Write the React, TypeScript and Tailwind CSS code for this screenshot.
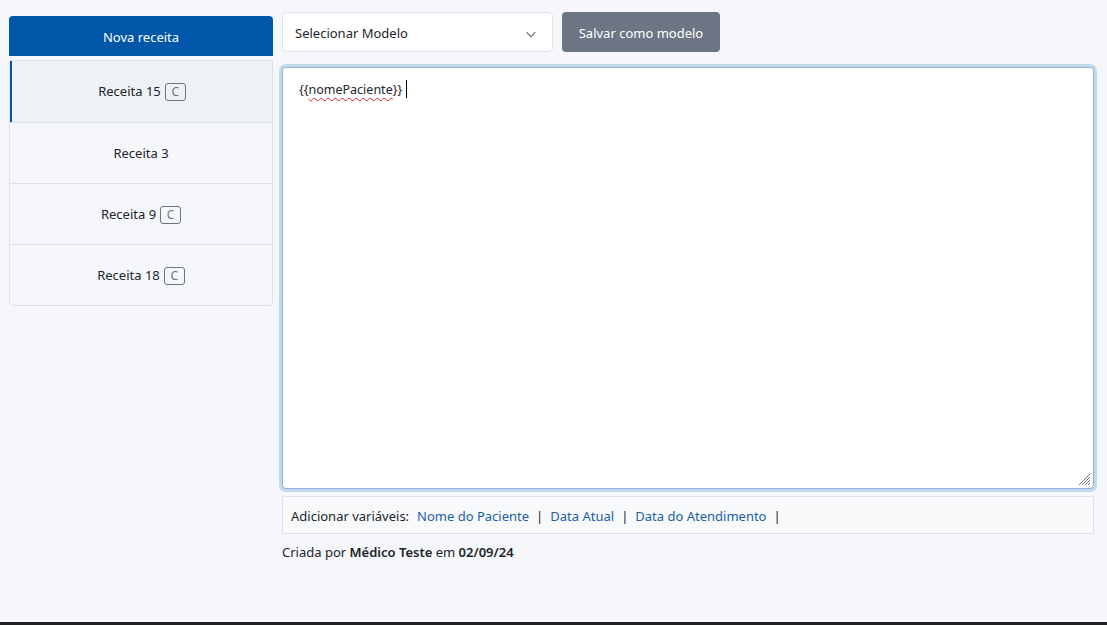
import React from "react";

const receitas = [
  { id: 15, compartilhada: true, ativa: true },
  { id: 3, compartilhada: false, ativa: false },
  { id: 9, compartilhada: true, ativa: false },
  { id: 18, compartilhada: true, ativa: false },
];

const Badge = () => (
  <span className="ml-[4px] inline-flex h-[18px] w-[21px] items-center justify-center rounded-[3px] border border-[#6c757d] text-[12px] leading-none text-[#6c757d]">
    C
  </span>
);

const App: React.FC = () => {
  return (
    <div
      className="flex h-[625px] flex-col bg-[#f5f7fb] text-[13px] text-[#212529]"
      style={{ fontFamily: '"Noto Sans", "Open Sans", sans-serif' }}
    >
      <div className="flex flex-1 gap-[9px] px-[9px] pt-[12px]">
        {/* sidebar */}
        <div className="flex w-[264px] flex-col pt-[4px]">
          <button className="h-[40px] w-full rounded-t-[4px] bg-[#0056a8] pt-[3px] text-white">
            Nova receita
          </button>
          <div className="mt-[4px] overflow-hidden rounded-b-[4px] border border-[#dee2e6] bg-[#f5f7fb]">
            {receitas.map((r, i) => (
              <div
                key={r.id}
                className={`flex h-[61px] items-center justify-center pt-[1px] ${
                  i > 0 ? "border-t border-[#dee2e6]" : ""
                } ${r.ativa ? "border-l-2 border-l-[#0056a8] bg-[#eef1f5]" : ""}`}
              >
                <span>Receita {r.id}</span>
                {r.compartilhada && <Badge />}
              </div>
            ))}
          </div>
        </div>

        {/* editor */}
        <div className="flex flex-1 flex-col pr-[4px]">
          <div className="flex gap-[9px]">
            <div className="flex h-[40px] w-[271px] items-center justify-between rounded-[4px] border border-[#dee2e6] bg-white pl-[12px] pr-[14px] pt-[3px]">
              <span>Selecionar Modelo</span>
              <svg width="14" height="14" viewBox="0 0 16 16" fill="none" stroke="#6c757d" strokeWidth="1.3">
                <path d="M3 6l5 5 5-5" />
              </svg>
            </div>
            <button className="h-[40px] w-[158px] rounded-[4px] bg-[#6c7684] pt-[3px] text-white">
              Salvar como modelo
            </button>
          </div>

          <div className="mt-[15px] h-[422px] rounded-[4px] border border-[#8fb3d8] bg-white shadow-[0_0_0_3px_#c4d8ec]">
            <div className="relative h-full px-[16px] pt-[8px] text-[12.5px]">
              <span>
                {"{{"}
                <span className="underline decoration-[#e02020] decoration-wavy decoration-1 underline-offset-[3px]">
                  nomePaciente
                </span>
                {"}}"}
              </span>
              <span className="ml-[4px] inline-block h-[18px] w-px translate-y-[4px] bg-black" />
              <svg className="absolute bottom-[2px] right-[2px]" width="14" height="14" viewBox="0 0 14 14" stroke="#777" strokeWidth="1">
                <path d="M13 2L2 13M13 5L5 13M13 8L8 13M13 11L11 13" />
              </svg>
            </div>
          </div>

          <div className="mt-[7px] flex h-[38px] items-center gap-[7px] border border-[#dee2e6] bg-[#f8f9fb] px-[8px] pt-[3px]">
            <span className="mr-[1px]">Adicionar variáveis:</span>
            <a className="text-[#1a5fa6]">Nome do Paciente</a>
            <span className="text-[#212529]">|</span>
            <a className="text-[#1a5fa6]">Data Atual</a>
            <span className="text-[#212529]">|</span>
            <a className="text-[#1a5fa6]">Data do Atendimento</a>
            <span className="text-[#212529]">|</span>
          </div>

          <p className="mt-[9px]">
            Criada por <b className="font-semibold">Médico Teste</b> em <b className="font-semibold">02/09/24</b>
          </p>
        </div>
      </div>
      <div className="h-[3px] bg-[#222]" />
    </div>
  );
};

export default App;
